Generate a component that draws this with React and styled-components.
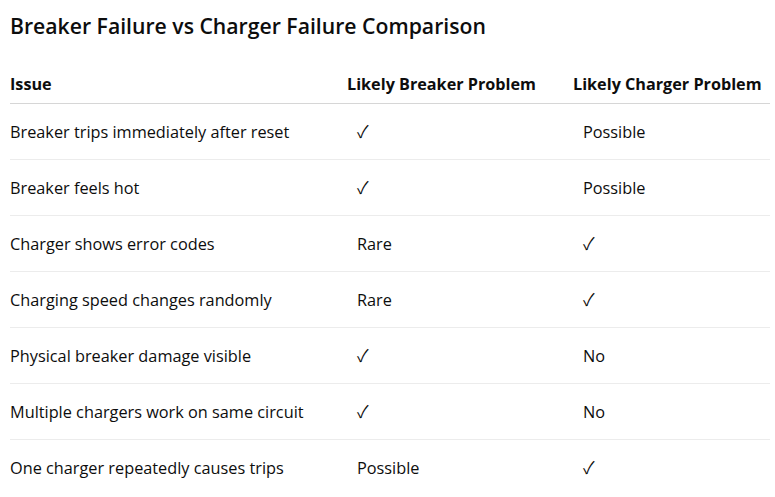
import React from "react";
import styled, { createGlobalStyle } from "styled-components";

const Global = createGlobalStyle`
  html, body { margin: 0; padding: 0; background: #ffffff; }
  body {
    font-family: "Open Sans", "Noto Sans", "DejaVu Sans", sans-serif;
    color: #0d0d0d;
  }
`;

const Page = styled.div`
  padding: 12px 5px 0 10px;
`;

const Title = styled.h2`
  margin: 0 0 24px 0;
  font-size: 21.2px;
  line-height: 28px;
  font-weight: 600;
`;

const Table = styled.div`
  display: grid;
  grid-template-columns: 337px 226px 1fr;
`;

const HeadCell = styled.div`
  height: 39px;
  display: flex;
  align-items: center;
  font-size: 16.2px;
  font-weight: 700;
  border-bottom: 1px solid #d6d6d6;
  white-space: nowrap;
`;

const Cell = styled.div`
  height: 55px;
  display: flex;
  align-items: center;
  font-size: 16.3px;
  padding-left: ${(p) => (p.$first ? "0" : "10px")};
  border-bottom: ${(p) => (p.$last ? "none" : "1px solid #ececec")};
  white-space: nowrap;
`;

const Check = styled.span`
  font-family: "Noto Sans CJK JP", "DejaVu Sans", sans-serif;
  font-size: 17px;
  font-weight: 400;
  line-height: 1;
  margin-top: -2px;
`;

const rows = [
  ["Breaker trips immediately after reset", "✓", "Possible"],
  ["Breaker feels hot", "✓", "Possible"],
  ["Charger shows error codes", "Rare", "✓"],
  ["Charging speed changes randomly", "Rare", "✓"],
  ["Physical breaker damage visible", "✓", "No"],
  ["Multiple chargers work on same circuit", "✓", "No"],
  ["One charger repeatedly causes trips", "Possible", "✓"],
];

export default function App() {
  return (
    <Page>
      <Global />
      <Title>Breaker Failure vs Charger Failure Comparison</Title>
      <Table>
        <HeadCell>Issue</HeadCell>
        <HeadCell>Likely Breaker Problem</HeadCell>
        <HeadCell>Likely Charger Problem</HeadCell>
        {rows.map((r, i) =>
          r.map((c, j) => (
            <Cell key={`${i}-${j}`} $first={j === 0} $last={i === rows.length - 1}>
              {c === "✓" ? <Check>✓</Check> : c}
            </Cell>
          ))
        )}
      </Table>
    </Page>
  );
}
